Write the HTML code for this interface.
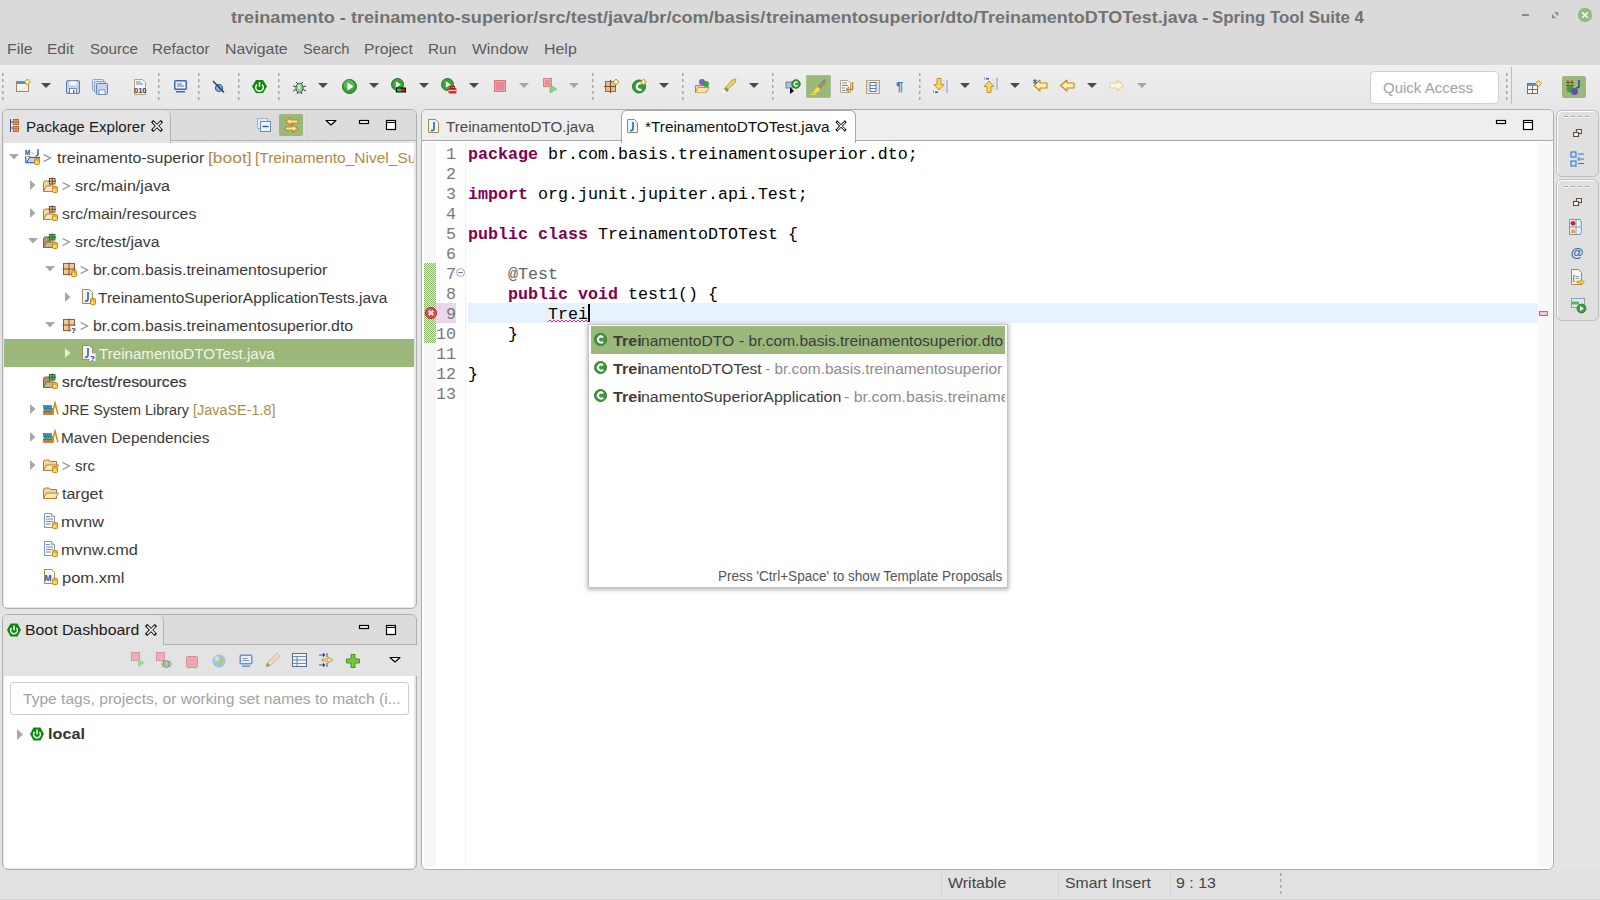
<!DOCTYPE html>
<html><head><meta charset="utf-8"><style>
html,body{margin:0;padding:0;width:1600px;height:900px;overflow:hidden;background:#e4e4e4}
body{position:relative;font-family:'Liberation Sans', sans-serif}
.t{position:absolute;white-space:pre;line-height:0;font-family:'Liberation Sans', sans-serif}
.r{position:absolute;box-sizing:border-box}
</style></head><body>
<div class="r" style="left:0px;top:0px;width:1600px;height:900px;background:#e4e4e4;"></div>
<div class="r" style="left:0px;top:0px;width:1600px;height:65px;background:#dadada;"></div>
<div class="t" style="left:231.32px;top:16.95px;font-size:16.3px;color:#727272;font-weight:700;transform:scaleX(1.1140);transform-origin:0 0;">treinamento - treinamento-superior/src/test/java/br/com/basis/</div>
<div class="t" style="left:765.82px;top:16.95px;font-size:16.3px;color:#727272;font-weight:700;transform:scaleX(1.1009);transform-origin:0 0;">treinamentosuperior/dto/TreinamentoDTOTest.java</div>
<div class="t" style="left:1202.22px;top:16.95px;font-size:16.3px;color:#727272;font-weight:700;transform:scaleX(1.2029);transform-origin:0 0;">-</div>
<div class="t" style="left:1211.99px;top:16.95px;font-size:16.3px;color:#727272;font-weight:700;transform:scaleX(1.0327);transform-origin:0 0;">Spring Tool Suite 4</div>
<div class="r" style="left:1522px;top:14px;width:7px;height:2px;background:#8a8a8a;"></div>
<svg class="r" style="left:1552px;top:12px;" width="7" height="7" viewBox="0 0 7 7"><path d="M2 0 H6.2 V4.2 Z M0 2 V6.2 H4.2 Z" fill="#8a8a8a"/></svg>
<svg class="r" style="left:1577px;top:7px;" width="16" height="16" viewBox="0 0 16 16"><circle cx="8" cy="8" r="7.2" fill="#96b97c"/><path d="M5.2 5.2 L10.8 10.8 M10.8 5.2 L5.2 10.8" stroke="#fff" stroke-width="1.5"/></svg>
<div class="t" style="left:7.13px;top:49.10px;font-size:15px;color:#5b5b5b;transform:scaleX(1.0595);transform-origin:0 0;">File</div>
<div class="t" style="left:47.36px;top:49.10px;font-size:15px;color:#5b5b5b;transform:scaleX(1.0357);transform-origin:0 0;">Edit</div>
<div class="t" style="left:89.72px;top:49.10px;font-size:15px;color:#5b5b5b;transform:scaleX(1.0103);transform-origin:0 0;">Source</div>
<div class="t" style="left:152.38px;top:49.10px;font-size:15px;color:#5b5b5b;transform:scaleX(1.0145);transform-origin:0 0;">Refactor</div>
<div class="t" style="left:225.13px;top:49.10px;font-size:15px;color:#5b5b5b;transform:scaleX(1.0576);transform-origin:0 0;">Navigate</div>
<div class="t" style="left:302.94px;top:49.10px;font-size:15px;color:#5b5b5b;transform:scaleX(0.9776);transform-origin:0 0;">Search</div>
<div class="t" style="left:364.35px;top:49.10px;font-size:15px;color:#5b5b5b;transform:scaleX(1.0446);transform-origin:0 0;">Project</div>
<div class="t" style="left:428.37px;top:49.10px;font-size:15px;color:#5b5b5b;transform:scaleX(1.0256);transform-origin:0 0;">Run</div>
<div class="t" style="left:472.32px;top:49.10px;font-size:15px;color:#5b5b5b;transform:scaleX(1.0502);transform-origin:0 0;">Window</div>
<div class="t" style="left:544.33px;top:49.10px;font-size:15px;color:#5b5b5b;transform:scaleX(1.0612);transform-origin:0 0;">Help</div>
<div class="r" style="left:0px;top:65px;width:1600px;height:44px;background:linear-gradient(#efefef,#e6e6e6);"></div>
<svg class="r" style="left:2px;top:72px;" width="2" height="30" viewBox="0 0 2 30"><rect x="0" y="1" width="1.5" height="3" fill="#a8a8a8"/><rect x="0" y="7" width="1.5" height="3" fill="#a8a8a8"/><rect x="0" y="13" width="1.5" height="3" fill="#a8a8a8"/><rect x="0" y="19" width="1.5" height="3" fill="#a8a8a8"/><rect x="0" y="25" width="1.5" height="3" fill="#a8a8a8"/></svg>
<svg class="r" style="left:158px;top:72px;" width="2" height="30" viewBox="0 0 2 30"><rect x="0" y="1" width="1.5" height="3" fill="#a8a8a8"/><rect x="0" y="7" width="1.5" height="3" fill="#a8a8a8"/><rect x="0" y="13" width="1.5" height="3" fill="#a8a8a8"/><rect x="0" y="19" width="1.5" height="3" fill="#a8a8a8"/><rect x="0" y="25" width="1.5" height="3" fill="#a8a8a8"/></svg>
<svg class="r" style="left:198px;top:72px;" width="2" height="30" viewBox="0 0 2 30"><rect x="0" y="1" width="1.5" height="3" fill="#a8a8a8"/><rect x="0" y="7" width="1.5" height="3" fill="#a8a8a8"/><rect x="0" y="13" width="1.5" height="3" fill="#a8a8a8"/><rect x="0" y="19" width="1.5" height="3" fill="#a8a8a8"/><rect x="0" y="25" width="1.5" height="3" fill="#a8a8a8"/></svg>
<svg class="r" style="left:238px;top:72px;" width="2" height="30" viewBox="0 0 2 30"><rect x="0" y="1" width="1.5" height="3" fill="#a8a8a8"/><rect x="0" y="7" width="1.5" height="3" fill="#a8a8a8"/><rect x="0" y="13" width="1.5" height="3" fill="#a8a8a8"/><rect x="0" y="19" width="1.5" height="3" fill="#a8a8a8"/><rect x="0" y="25" width="1.5" height="3" fill="#a8a8a8"/></svg>
<svg class="r" style="left:278px;top:72px;" width="2" height="30" viewBox="0 0 2 30"><rect x="0" y="1" width="1.5" height="3" fill="#a8a8a8"/><rect x="0" y="7" width="1.5" height="3" fill="#a8a8a8"/><rect x="0" y="13" width="1.5" height="3" fill="#a8a8a8"/><rect x="0" y="19" width="1.5" height="3" fill="#a8a8a8"/><rect x="0" y="25" width="1.5" height="3" fill="#a8a8a8"/></svg>
<svg class="r" style="left:592px;top:72px;" width="2" height="30" viewBox="0 0 2 30"><rect x="0" y="1" width="1.5" height="3" fill="#a8a8a8"/><rect x="0" y="7" width="1.5" height="3" fill="#a8a8a8"/><rect x="0" y="13" width="1.5" height="3" fill="#a8a8a8"/><rect x="0" y="19" width="1.5" height="3" fill="#a8a8a8"/><rect x="0" y="25" width="1.5" height="3" fill="#a8a8a8"/></svg>
<svg class="r" style="left:682px;top:72px;" width="2" height="30" viewBox="0 0 2 30"><rect x="0" y="1" width="1.5" height="3" fill="#a8a8a8"/><rect x="0" y="7" width="1.5" height="3" fill="#a8a8a8"/><rect x="0" y="13" width="1.5" height="3" fill="#a8a8a8"/><rect x="0" y="19" width="1.5" height="3" fill="#a8a8a8"/><rect x="0" y="25" width="1.5" height="3" fill="#a8a8a8"/></svg>
<svg class="r" style="left:772px;top:72px;" width="2" height="30" viewBox="0 0 2 30"><rect x="0" y="1" width="1.5" height="3" fill="#a8a8a8"/><rect x="0" y="7" width="1.5" height="3" fill="#a8a8a8"/><rect x="0" y="13" width="1.5" height="3" fill="#a8a8a8"/><rect x="0" y="19" width="1.5" height="3" fill="#a8a8a8"/><rect x="0" y="25" width="1.5" height="3" fill="#a8a8a8"/></svg>
<svg class="r" style="left:919px;top:72px;" width="2" height="30" viewBox="0 0 2 30"><rect x="0" y="1" width="1.5" height="3" fill="#a8a8a8"/><rect x="0" y="7" width="1.5" height="3" fill="#a8a8a8"/><rect x="0" y="13" width="1.5" height="3" fill="#a8a8a8"/><rect x="0" y="19" width="1.5" height="3" fill="#a8a8a8"/><rect x="0" y="25" width="1.5" height="3" fill="#a8a8a8"/></svg>
<svg class="r" style="left:1506px;top:72px;" width="2" height="30" viewBox="0 0 2 30"><rect x="0" y="1" width="1.5" height="3" fill="#a8a8a8"/><rect x="0" y="7" width="1.5" height="3" fill="#a8a8a8"/><rect x="0" y="13" width="1.5" height="3" fill="#a8a8a8"/><rect x="0" y="19" width="1.5" height="3" fill="#a8a8a8"/><rect x="0" y="25" width="1.5" height="3" fill="#a8a8a8"/></svg>
<div class="r" style="left:1511px;top:67px;width:1px;height:37px;background:#bdbdbd;"></div>
<svg class="r" style="left:41px;top:83px;" width="10" height="6" viewBox="0 0 10 6"><path d="M0 0 L10 0 L5 5 Z" fill="#4a4a4a"/></svg>
<svg class="r" style="left:318px;top:83px;" width="10" height="6" viewBox="0 0 10 6"><path d="M0 0 L10 0 L5 5 Z" fill="#4a4a4a"/></svg>
<svg class="r" style="left:369px;top:83px;" width="10" height="6" viewBox="0 0 10 6"><path d="M0 0 L10 0 L5 5 Z" fill="#4a4a4a"/></svg>
<svg class="r" style="left:419px;top:83px;" width="10" height="6" viewBox="0 0 10 6"><path d="M0 0 L10 0 L5 5 Z" fill="#4a4a4a"/></svg>
<svg class="r" style="left:469px;top:83px;" width="10" height="6" viewBox="0 0 10 6"><path d="M0 0 L10 0 L5 5 Z" fill="#4a4a4a"/></svg>
<svg class="r" style="left:659px;top:83px;" width="10" height="6" viewBox="0 0 10 6"><path d="M0 0 L10 0 L5 5 Z" fill="#4a4a4a"/></svg>
<svg class="r" style="left:749px;top:83px;" width="10" height="6" viewBox="0 0 10 6"><path d="M0 0 L10 0 L5 5 Z" fill="#4a4a4a"/></svg>
<svg class="r" style="left:960px;top:83px;" width="10" height="6" viewBox="0 0 10 6"><path d="M0 0 L10 0 L5 5 Z" fill="#4a4a4a"/></svg>
<svg class="r" style="left:1010px;top:83px;" width="10" height="6" viewBox="0 0 10 6"><path d="M0 0 L10 0 L5 5 Z" fill="#4a4a4a"/></svg>
<svg class="r" style="left:1087px;top:83px;" width="10" height="6" viewBox="0 0 10 6"><path d="M0 0 L10 0 L5 5 Z" fill="#4a4a4a"/></svg>
<svg class="r" style="left:519px;top:83px;" width="10" height="6" viewBox="0 0 10 6"><path d="M0 0 L10 0 L5 5 Z" fill="#a5a5a5"/></svg>
<svg class="r" style="left:569px;top:83px;" width="10" height="6" viewBox="0 0 10 6"><path d="M0 0 L10 0 L5 5 Z" fill="#a5a5a5"/></svg>
<svg class="r" style="left:1137px;top:83px;" width="10" height="6" viewBox="0 0 10 6"><path d="M0 0 L10 0 L5 5 Z" fill="#a5a5a5"/></svg>
<div class="r" style="left:805.5px;top:74.5px;width:25px;height:23px;background:#9bb77a;border-radius:2px;box-shadow:inset 0 0 0 1px #a8c090;"></div>
<div class="r" style="left:1561.5px;top:75.5px;width:24.5px;height:22.5px;background:#9bb77a;border-radius:2px;"></div>
<svg class="r" style="left:14.5px;top:78px;" width="16" height="16" viewBox="0 0 16 16"><rect x="1.5" y="3.5" width="12" height="10" fill="#eef6fc" stroke="#a88a50"/><rect x="2" y="4" width="11" height="2" fill="#4a90d8"/><path d="M4 13 Q10 12 12 7" stroke="#f0d890" fill="none"/><path d="M12.5 1 L15.5 4 L12.5 7 L9.5 4 Z" fill="#f6e27a" stroke="#b08a20" stroke-width="0.9"/><path d="M12.5 2 V6 M10.5 4 H14.5" stroke="#fff" stroke-width="0.8"/></svg>
<svg class="r" style="left:65px;top:79px;" width="16" height="16" viewBox="0 0 16 16"><rect x="1.5" y="1.5" width="13" height="13" rx="1.5" fill="#c4d4ee" stroke="#5878b0"/><rect x="4" y="2" width="8" height="5" fill="#f4f6fa" stroke="#a8b8d0" stroke-width="0.6"/><rect x="4.5" y="9.5" width="7" height="5" fill="#f8f8fc" stroke="#5878b0" stroke-width="0.8"/><rect x="8" y="11" width="1.5" height="3" fill="#5878b0"/></svg>
<svg class="r" style="left:92px;top:79px;" width="16" height="16" viewBox="0 0 16 16"><rect x="0.5" y="0.5" width="11" height="11" rx="1" fill="#dfe8f6" stroke="#7890c0" stroke-width="0.8"/><rect x="2.5" y="2.5" width="11" height="11" rx="1" fill="#d4e0f2" stroke="#7890c0" stroke-width="0.8"/><rect x="4.5" y="4.5" width="11" height="11" rx="1" fill="#c4d4ee" stroke="#5878b0" stroke-width="0.9"/><rect x="7" y="11" width="6" height="4.5" fill="#f8f8fc" stroke="#5878b0" stroke-width="0.7"/></svg>
<svg class="r" style="left:133px;top:79px;" width="16" height="16" viewBox="0 0 16 16"><path d="M1.5 0.5 H9.5 L12.5 3.5 V15.5 H1.5 Z" fill="#f4f6fa" stroke="#c0a060"/><path d="M3 3 H8 M3 5 H10" stroke="#5878b0" stroke-width="0.9"/><text x="1" y="14" font-family="Liberation Sans" font-weight="700" font-size="7.5" fill="#2a3a6a">010</text></svg>
<svg class="r" style="left:173px;top:79px;" width="16" height="16" viewBox="0 0 16 16"><rect x="1" y="1" width="13" height="10" rx="1.5" fill="#3a68b8"/><rect x="2.5" y="2.5" width="10" height="7" fill="#eef4fc"/><path d="M4 5 H9 M4 7 H11" stroke="#3a68b8" stroke-width="0.9"/><rect x="3" y="12" width="9" height="1.5" fill="#3a68b8"/></svg>
<svg class="r" style="left:211px;top:79px;" width="16" height="16" viewBox="0 0 16 16"><circle cx="8" cy="9" r="3.6" fill="#8ab0d8" stroke="#2a5a98"/><path d="M2 2 L13 13.5" stroke="#1a3a78" stroke-width="1.4"/></svg>
<svg class="r" style="left:252px;top:79px;" width="16" height="16" viewBox="0 0 16 16"><path d="M4 1 H11 L15 7.5 L11 14 H4 L0 7.5 Z" fill="#0c8a0c"/><path d="M5 5.5 A3.8 3.8 0 1 0 10 5.5" stroke="#fff" stroke-width="1.5" fill="none"/><path d="M7.5 3 V8" stroke="#fff" stroke-width="1.5"/></svg>
<svg class="r" style="left:292px;top:79px;" width="16" height="16" viewBox="0 0 16 16"><path d="M4 3 L6 5 M11 3 L9 5 M1 7 L5 8 M14 7 L10 8 M1 12 L5 10 M14 12 L10 10 M5 15 L6 12 M10 15 L9 12" stroke="#2a4a4a" stroke-width="1"/><ellipse cx="7.5" cy="9" rx="3.6" ry="4.8" fill="#9cc48c" stroke="#3a6a5a"/><ellipse cx="7.2" cy="8" rx="1.3" ry="2.4" fill="#d8f0c8"/></svg>
<svg class="r" style="left:342px;top:79px;" width="16" height="16" viewBox="0 0 16 16"><circle cx="7.5" cy="7.5" r="7" fill="#3aa03a" stroke="#1e7a1e"/><circle cx="7" cy="6" r="5" fill="#58b858"/><path d="M5.5 3.5 L11.5 7.5 L5.5 11.5 Z" fill="#fff"/></svg>
<svg class="r" style="left:391px;top:78px;" width="16" height="16" viewBox="0 0 16 16"><circle cx="6.5" cy="6.5" r="6" fill="#3aa03a" stroke="#1e7a1e"/><path d="M4.8 3.3 L9.8 6.5 L4.8 9.7 Z" fill="#fff"/><rect x="5" y="9.5" width="10" height="5" fill="#000"/><rect x="6" y="10.5" width="4" height="3" fill="#2ad02a"/><rect x="10" y="10.5" width="4" height="3" fill="#e01818"/></svg>
<svg class="r" style="left:441px;top:78px;" width="16" height="16" viewBox="0 0 16 16"><circle cx="6.5" cy="6.5" r="6" fill="#3aa03a" stroke="#1e7a1e"/><path d="M4.8 3.3 L9.8 6.5 L4.8 9.7 Z" fill="#fff"/><rect x="7.5" y="10" width="8" height="5.5" rx="1" fill="#e02828"/><rect x="9.5" y="8.5" width="4" height="2" fill="none" stroke="#c01818"/><path d="M7.5 12.5 H15.5" stroke="#fff" stroke-width="0.8"/></svg>
<svg class="r" style="left:492px;top:78px;" width="16" height="16" viewBox="0 0 16 16"><rect x="2.5" y="2.5" width="11" height="11" fill="#f0a0a8" stroke="#d87880"/><rect x="4" y="4" width="8" height="8" fill="#e88890"/></svg>
<svg class="r" style="left:543px;top:78px;" width="16" height="16" viewBox="0 0 16 16"><rect x="0.5" y="0.5" width="8" height="8" fill="#f0a8b0" stroke="#d88088"/><rect x="2" y="2" width="5" height="5" fill="#e89098"/><path d="M7 7 L14 11 L7 15 Z" fill="#8ad08a" stroke="#6ab86a" stroke-width="0.6"/></svg>
<svg class="r" style="left:604px;top:78px;" width="16" height="16" viewBox="0 0 16 16"><rect x="1.5" y="3.5" width="10" height="10" fill="#e0c090" stroke="#a06838"/><path d="M6.5 2 V15 M0 8.5 H12" stroke="#804828" stroke-width="1.1"/><path d="M12 1 L15 4 L12 7 L9 4 Z" fill="#f6e27a" stroke="#b08a20" stroke-width="0.9"/><path d="M12 2 V6 M10 4 H14" stroke="#fff" stroke-width="0.8"/></svg>
<svg class="r" style="left:632px;top:78px;" width="16" height="16" viewBox="0 0 16 16"><circle cx="7" cy="8.5" r="6.5" fill="#3a9a3a" stroke="#1e7a1e"/><path d="M9.5 5.5 A3.3 3.3 0 1 0 9.5 11.5" stroke="#fff" stroke-width="2.2" fill="none"/><path d="M11.5 1 L14.5 4 L11.5 7 L8.5 4 Z" fill="#f6e27a" stroke="#b08a20" stroke-width="0.9"/><path d="M11.5 2 V6 M9.5 4 H13.5" stroke="#fff" stroke-width="0.8"/></svg>
<svg class="r" style="left:694px;top:78px;" width="16" height="16" viewBox="0 0 16 16"><path d="M1.5 7.5 H12.5 L14.5 9 L12 14.5 H1.5 Z" fill="#f4d898" stroke="#b88030"/><path d="M1.5 14.5 L4 9.5 H15 L12 14.5" fill="#f8e4b0" stroke="#b88030" stroke-width="0.8"/><circle cx="8" cy="4" r="3" fill="#7a60c0"/><circle cx="12" cy="6" r="3" fill="#3aa03a"/></svg>
<svg class="r" style="left:721px;top:78px;" width="16" height="16" viewBox="0 0 16 16"><path d="M2 14 L5 9 L11 2 L15 1 L14 5 L7 11 Z" fill="#f0d060" stroke="#c09020" stroke-width="0.8"/><path d="M4 10 L7 13" stroke="#888" stroke-width="2.5"/><path d="M1 15 L4 12" stroke="#fff8c0" stroke-width="2.5"/></svg>
<svg class="r" style="left:785px;top:79px;" width="16" height="16" viewBox="0 0 16 16"><rect x="1" y="3" width="7" height="6" fill="#b0c0e0" stroke="#6070a0" stroke-width="0.8"/><path d="M5 8 L9 12 L5 15 Z" fill="#111"/><circle cx="11" cy="5" r="4.2" fill="#3aa03a" stroke="#1e7a1e"/><path d="M12.5 3.5 A2 2 0 1 0 12.5 6.5" stroke="#fff" stroke-width="1.3" fill="none"/></svg>
<svg class="r" style="left:810px;top:79px;" width="16" height="16" viewBox="0 0 16 16"><path d="M8 8 L14 0.5 L16 2.5 L10 10 Z" fill="#9a9070" stroke="#807858" stroke-width="0.6"/><path d="M8 8 L10 10 L9.5 12 Q6 14.5 2.5 15 Q4 11 6.5 8.5 Z" fill="#f4e04a" stroke="#d8c030" stroke-width="0.6"/><path d="M0.5 15.5 H6" stroke="#f0dc40" stroke-width="1.2"/></svg>
<svg class="r" style="left:839px;top:79px;" width="16" height="16" viewBox="0 0 16 16"><path d="M1.5 1.5 H9 L11.5 4 V13.5 H1.5 Z" fill="#f8f8fc" stroke="#b8a070" stroke-width="0.9"/><path d="M3 4 H8 M3 6.5 H9 M3 9 H6 M3 11.5 H6" stroke="#4870b8" stroke-width="0.8"/><path d="M13.5 3 V10.5 H8.5" stroke="#c08820" stroke-width="1.5" fill="none"/><path d="M10 8 L7.5 10.5 L10 13" stroke="#c08820" stroke-width="1.4" fill="none"/></svg>
<svg class="r" style="left:865px;top:79px;" width="16" height="16" viewBox="0 0 16 16"><rect x="1.5" y="1.5" width="13" height="13" fill="#f4f0e4" stroke="#b8a070"/><rect x="5" y="3.5" width="6" height="9" fill="#fff" stroke="#4870b8" stroke-width="0.9"/><path d="M5 6.5 H11 M5 9.5 H11" stroke="#4870b8" stroke-width="0.9"/><path d="M3 3 V13 M13 3 V13" stroke="#8098c0" stroke-width="0.8" stroke-dasharray="1 1"/></svg>
<svg class="r" style="left:893px;top:78px;" width="16" height="16" viewBox="0 0 16 16"><text x="3" y="13" font-family="Liberation Sans" font-weight="700" font-size="13" fill="#3a78c0">&#182;</text></svg>
<svg class="r" style="left:932px;top:78px;" width="16" height="16" viewBox="0 0 16 16"><path d="M5 0.5 H9 V6.5 H12 L7 12 L2 6.5 H5 Z" fill="#f8d868" stroke="#c08820" stroke-width="0.9"/><path d="M10.5 3 H13 M10.5 6 H13 M11 9 H13 M9 12 H13" stroke="#a8b8d8" stroke-width="0.6"/><path d="M15 2 V15" stroke="#6888b8" stroke-width="0.8"/><rect x="3" y="13.5" width="3" height="1.5" fill="#3a58a0"/><path d="M1.5 12 V15" stroke="#6888b8" stroke-width="0.6"/></svg>
<svg class="r" style="left:982px;top:77px;" width="16" height="16" viewBox="0 0 16 16"><path d="M5 15.5 H9 V9.5 H12 L7 4 L2 9.5 H5 Z" fill="#f8d868" stroke="#c08820" stroke-width="0.9"/><path d="M10.5 3 H13 M11 6 H13 M11 9 H13 M10.5 12 H13" stroke="#a8b8d8" stroke-width="0.6"/><path d="M15 0.5 V13" stroke="#6888b8" stroke-width="0.8"/><rect x="4" y="1" width="3" height="1.5" fill="#3a58a0"/><path d="M2.5 0 V3" stroke="#6888b8" stroke-width="0.6"/></svg>
<svg class="r" style="left:1032px;top:78px;" width="16" height="16" viewBox="0 0 16 16"><path d="M15 5 H8 V2 L2 7.5 L8 13 V10 H15 Z" fill="#fff0b0" stroke="#c08820" stroke-width="1.1" stroke-linejoin="round"/><path d="M3 1 V6 M1 2 L5 5 M5 2 L1 5" stroke="#2a4a8a" stroke-width="0.9"/></svg>
<svg class="r" style="left:1059px;top:78px;" width="16" height="16" viewBox="0 0 16 16"><path d="M15 5 H8 V2 L1.5 7.5 L8 13 V10 H15 Z" fill="#fff0b0" stroke="#c08820" stroke-width="1.1" stroke-linejoin="round"/></svg>
<svg class="r" style="left:1109px;top:78px;" width="16" height="16" viewBox="0 0 16 16"><path d="M1 5 H8 V2 L14.5 7.5 L8 13 V10 H1 Z" fill="#fbf6e4" stroke="#e8d098" stroke-width="1.1" stroke-linejoin="round"/></svg>
<svg class="r" style="left:1526px;top:79px;" width="16" height="16" viewBox="0 0 16 16"><rect x="1.5" y="4.5" width="10" height="10" fill="#f4f4f4" stroke="#807050"/><rect x="2" y="5" width="9" height="2" fill="#5a98d8"/><path d="M6.5 7 V14.5 M1.5 10.5 H11.5" stroke="#807050"/><path d="M12.5 1.5 L15.5 4.5 L12.5 7.5 L9.5 4.5 Z" fill="#f6e27a" stroke="#b08a20" stroke-width="0.9"/><path d="M12.5 2.5 V6.5 M10.5 4.5 H14.5" stroke="#fff" stroke-width="0.8"/></svg>
<svg class="r" style="left:1566px;top:79px;" width="16" height="16" viewBox="0 0 16 16"><path d="M2 1 V8 M6 1 V8 M0 3.5 H8 M0 6.5 H8" stroke="#8a4a2a" stroke-width="1"/><circle cx="4" cy="10" r="3.5" fill="#3aa03a"/><circle cx="8.5" cy="12.5" r="3.5" fill="#6050b0"/><path d="M13 1 V7 Q13 9 10 9" stroke="#2050b0" stroke-width="1.5" fill="none"/></svg>
<div class="r" style="left:1369.5px;top:70.5px;width:129px;height:33px;background:#fff;border:1px solid #cfcfcf;border-radius:4px;"></div>
<div class="t" style="left:1383.03px;top:87.50px;font-size:15px;color:#a3a3a3;transform:scaleX(1.0000);transform-origin:0 0;">Quick Access</div>
<div class="r" style="left:1.5px;top:109px;width:415.5px;height:500px;background:#e6e6e6;border:1px solid #aeaeae;border-radius:6px;"></div>
<div class="r" style="left:4px;top:143px;width:410px;height:464px;background:#fff;"></div>
<div class="r" style="left:2.5px;top:110px;width:413.5px;height:31px;background:#dcdcdc;border-radius:5px 5px 0 0;"></div>
<div class="r" style="left:169.5px;top:140px;width:246.5px;height:1px;background:#b4b4b4;"></div>
<div class="r" style="left:2.5px;top:110px;width:168px;height:33px;background:#e3e3e3;border-radius:5px 6px 0 0;border-right:1px solid #b4b4b4;"></div>
<div class="t" style="left:25.59px;top:126.80px;font-size:15px;color:#1a1a1a;transform:scaleX(1.0066);transform-origin:0 0;">Package Explorer</div>
<svg class="r" style="left:151px;top:120px;" width="12" height="12" viewBox="0 0 12 12"><path d="M2.2 2.2 L9.8 9.8 M9.8 2.2 L2.2 9.8" stroke="#000" stroke-width="3.2" stroke-linecap="square"/><path d="M2.6 2.6 L9.4 9.4 M9.4 2.6 L2.6 9.4" stroke="#fff" stroke-width="1.5" stroke-linecap="square"/></svg>
<div class="r" style="left:279px;top:114px;width:24px;height:22px;background:#9bb77a;border-radius:2px;"></div>
<svg class="r" style="left:8px;top:118px;" width="16" height="16" viewBox="0 0 16 16"><path d="M2.5 1 V14 M2.5 4 H5 M2.5 10 H5" stroke="#3a4a6a" stroke-width="1"/><rect x="5.5" y="1.5" width="5" height="5" fill="#f0b070" stroke="#b06030" stroke-width="0.9"/><path d="M8.0 1.5 V6.5 M5.5 4.0 H10.5" stroke="#b06030" stroke-width="0.8"/><rect x="5.5" y="8.5" width="5" height="5" fill="#f0b070" stroke="#b06030" stroke-width="0.9"/><path d="M8.0 8.5 V13.5 M5.5 11.0 H10.5" stroke="#b06030" stroke-width="0.8"/></svg>
<svg class="r" style="left:257px;top:118px;" width="16" height="16" viewBox="0 0 16 16"><rect x="0.5" y="0.5" width="10" height="10" fill="#e8eef8" stroke="#90a8c8" stroke-width="0.8"/><rect x="3.5" y="3.5" width="10" height="10" fill="#f0f4fc" stroke="#6888b8"/><path d="M5.5 8.5 H11.5" stroke="#2a58a8" stroke-width="1.4"/></svg>
<svg class="r" style="left:284px;top:117px;" width="16" height="16" viewBox="0 0 16 16"><path d="M14 3 H7 V0.8 L1.5 4.5 L7 8.2 V6 H14 Z" fill="#fce89a" stroke="#c08820" stroke-width="1.1" stroke-linejoin="round"/><path d="M1.5 10 H8.5 V7.8 L14 11.5 L8.5 15.2 V13 H1.5 Z" fill="#fce89a" stroke="#c08820" stroke-width="1.1" stroke-linejoin="round"/></svg>
<svg class="r" style="left:324px;top:118px;" width="16" height="16" viewBox="0 0 16 16"><path d="M2 2.5 H12 L7 7 Z" fill="#fff" stroke="#000" stroke-width="1.1" stroke-linejoin="round"/></svg>
<svg class="r" style="left:358px;top:119px;" width="12" height="6" viewBox="0 0 12 6"><rect x="1.5" y="1.5" width="9" height="3" fill="#fff" stroke="#000" stroke-width="1.2"/></svg>
<svg class="r" style="left:385px;top:119px;" width="12" height="12" viewBox="0 0 12 12"><rect x="1.5" y="1.5" width="9" height="9" fill="#fff" stroke="#000" stroke-width="1.2"/><path d="M1.5 3.5 H10.5" stroke="#000" stroke-width="1"/></svg>
<div class="r" style="left:307px;top:112px;width:1px;height:28px;background:#d2d2d2;"></div>
<div class="r" style="left:4px;top:339px;width:410px;height:28px;background:#9bb77a;"></div>
<div class="r" style="left:4px;top:142px;width:410px;height:464px;overflow:hidden">
<svg class="r" style="left:5px;top:12px;" width="10" height="7" viewBox="0 0 10 7"><path d="M0 0 L10 0 L5 5.5 Z" fill="#a8a8a8"/></svg>
<svg class="r" style="left:21px;top:7px;" width="16" height="16" viewBox="0 0 16 16"><text x="-0.3" y="5.6" font-family="Liberation Sans" font-weight="700" font-size="6.5" fill="#1a4a98">M</text><path d="M6.5 3 L8 4.5 M7.5 5 H9" stroke="#c8a050" stroke-width="0.8"/><path d="M13 0 V5 Q13 7 10.5 6.8" stroke="#1a5aa0" stroke-width="1.3" fill="none"/><path d="M0.8 7 V13.8 H12 L14.8 8.3 H4.5 L1.8 13" fill="#b8d4f4" stroke="#2a48b0" stroke-width="1"/><path d="M1 7 H5 L6 8" stroke="#f0d890" stroke-width="1"/><rect x="9.5" y="9.5" width="5" height="6" rx="1" fill="#f8c848" stroke="#c88010" stroke-width="0.9"/><path d="M10 11 H14" stroke="#c88010" stroke-width="0.7"/><rect x="11" y="12" width="1" height="2.5" fill="#fff4c0"/></svg>
<svg class="r" style="left:39.4px;top:11.699999999999989px;" width="9" height="8" viewBox="0 0 9 8"><path d="M0.6 0.6 L7.6 4 L0.6 7.4" stroke="#8a8a8a" stroke-width="1.15" fill="none"/></svg>
<div class="t" style="left:52.86px;top:16.33px;font-size:15.5px;color:#3a3a3a;transform:scaleX(1.0300);transform-origin:0 0;">treinamento-superior</div>
<div class="t" style="left:203.78px;top:16.33px;font-size:15.5px;color:#b08a48;transform:scaleX(1.1263);transform-origin:0 0;">[boot]</div>
<div class="t" style="left:251.00px;top:16.33px;font-size:15.5px;color:#b08a48;transform:scaleX(1.0000);transform-origin:0 0;">[Treinamento_Nivel_Superior]</div>
<svg class="r" style="left:26px;top:38px;" width="7" height="10" viewBox="0 0 7 10"><path d="M0 0 L5.5 5 L0 10 Z" fill="#a8a8a8"/></svg>
<svg class="r" style="left:39px;top:35px;" width="16" height="16" viewBox="0 0 16 16"><path d="M0.5 6 Q0.5 4 2.5 4 H6 L7 5 V14.5 H0.5 Z" fill="#f0d8a0" stroke="#b07830"/><path d="M0.5 14.5 L3.5 9 H12 L9.5 14.5 Z" fill="#f8e8b8" stroke="#b07830" stroke-width="0.9"/><rect x="6.5" y="1.5" width="5.5" height="5.5" fill="#e8d0a0" stroke="#6a4030" stroke-width="0.9"/><path d="M9.25 0.5 V8.0 M5.5 4.25 H13.0" stroke="#6a4030" stroke-width="1"/><rect x="9.5" y="9.5" width="5" height="6" rx="1" fill="#f8c848" stroke="#c88010" stroke-width="0.9"/><path d="M10 11 H14" stroke="#c88010" stroke-width="0.7"/><rect x="11" y="12" width="1" height="2.5" fill="#fff4c0"/></svg>
<svg class="r" style="left:58.05px;top:39.69999999999999px;" width="9" height="8" viewBox="0 0 9 8"><path d="M0.6 0.6 L7.6 4 L0.6 7.4" stroke="#8a8a8a" stroke-width="1.15" fill="none"/></svg>
<div class="t" style="left:71.12px;top:44.33px;font-size:15.5px;color:#3a3a3a;transform:scaleX(1.0393);transform-origin:0 0;">src/main/java</div>
<svg class="r" style="left:26px;top:66px;" width="7" height="10" viewBox="0 0 7 10"><path d="M0 0 L5.5 5 L0 10 Z" fill="#a8a8a8"/></svg>
<svg class="r" style="left:39px;top:63px;" width="16" height="16" viewBox="0 0 16 16"><path d="M0.5 6 Q0.5 4 2.5 4 H6 L7 5 V14.5 H0.5 Z" fill="#f0d8a0" stroke="#b07830"/><path d="M0.5 14.5 L3.5 9 H12 L9.5 14.5 Z" fill="#f8e8b8" stroke="#b07830" stroke-width="0.9"/><rect x="6.5" y="1.5" width="5.5" height="5.5" fill="#e8d0a0" stroke="#6a4030" stroke-width="0.9"/><path d="M9.25 0.5 V8.0 M5.5 4.25 H13.0" stroke="#6a4030" stroke-width="1"/><rect x="9.5" y="9.5" width="5" height="6" rx="1" fill="#f8c848" stroke="#c88010" stroke-width="0.9"/><path d="M10 11 H14" stroke="#c88010" stroke-width="0.7"/><rect x="11" y="12" width="1" height="2.5" fill="#fff4c0"/></svg>
<div class="t" style="left:57.77px;top:72.33px;font-size:15.5px;color:#3a3a3a;transform:scaleX(1.0266);transform-origin:0 0;">src/main/resources</div>
<svg class="r" style="left:24px;top:96px;" width="10" height="7" viewBox="0 0 10 7"><path d="M0 0 L10 0 L5 5.5 Z" fill="#a8a8a8"/></svg>
<svg class="r" style="left:39px;top:91px;" width="16" height="16" viewBox="0 0 16 16"><path d="M0.5 6 Q0.5 4 2.5 4 H6 L7 5 V14.5 H0.5 Z" fill="#a89878" stroke="#806030"/><path d="M0.5 14.5 L3.5 9 H12 L9.5 14.5 Z" fill="#c8b890" stroke="#806030" stroke-width="0.9"/><rect x="6.5" y="1.5" width="5.5" height="5.5" fill="#58b858" stroke="#2a6a2a" stroke-width="0.9"/><path d="M9.25 0.5 V8.0 M5.5 4.25 H13.0" stroke="#2a6a2a" stroke-width="1"/><rect x="9.5" y="9.5" width="5" height="6" rx="1" fill="#f8c848" stroke="#c88010" stroke-width="0.9"/><path d="M10 11 H14" stroke="#c88010" stroke-width="0.7"/><rect x="11" y="12" width="1" height="2.5" fill="#fff4c0"/></svg>
<svg class="r" style="left:58.05px;top:95.69999999999999px;" width="9" height="8" viewBox="0 0 9 8"><path d="M0.6 0.6 L7.6 4 L0.6 7.4" stroke="#8a8a8a" stroke-width="1.15" fill="none"/></svg>
<div class="t" style="left:71.12px;top:100.33px;font-size:15.5px;color:#3a3a3a;transform:scaleX(1.0234);transform-origin:0 0;">src/test/java</div>
<svg class="r" style="left:41px;top:124px;" width="10" height="7" viewBox="0 0 10 7"><path d="M0 0 L10 0 L5 5.5 Z" fill="#a8a8a8"/></svg>
<svg class="r" style="left:58px;top:119px;" width="16" height="16" viewBox="0 0 16 16"><rect x="1.5" y="2.5" width="11" height="11" fill="#e8cc98" stroke="#8a4a30" stroke-width="0.9"/><path d="M7.0 1.5 V14.5 M0.5 8.0 H13.5" stroke="#8a4a30" stroke-width="1"/><rect x="9.5" y="9.5" width="5" height="6" rx="1" fill="#f8c848" stroke="#c88010" stroke-width="0.9"/><path d="M10 11 H14" stroke="#c88010" stroke-width="0.7"/><rect x="11" y="12" width="1" height="2.5" fill="#fff4c0"/></svg>
<svg class="r" style="left:76.05px;top:123.69999999999999px;" width="9" height="8" viewBox="0 0 9 8"><path d="M0.6 0.6 L7.6 4 L0.6 7.4" stroke="#8a8a8a" stroke-width="1.15" fill="none"/></svg>
<div class="t" style="left:88.72px;top:128.33px;font-size:15.5px;color:#3a3a3a;transform:scaleX(1.0228);transform-origin:0 0;">br.com.basis.treinamentosuperior</div>
<svg class="r" style="left:61px;top:150px;" width="7" height="10" viewBox="0 0 7 10"><path d="M0 0 L5.5 5 L0 10 Z" fill="#a8a8a8"/></svg>
<svg class="r" style="left:77px;top:147px;" width="16" height="16" viewBox="0 0 16 16"><path d="M1.5 0.5 H8.5 L11.5 3.5 V14.5 H1.5 Z" fill="#eef4fc" stroke="#a88a50"/><path d="M7 3 V10 Q7 12.5 4 12" stroke="#2a68b0" stroke-width="1.6" fill="none"/><rect x="9.5" y="9.5" width="5" height="6" rx="1" fill="#f8c848" stroke="#c88010" stroke-width="0.9"/><path d="M10 11 H14" stroke="#c88010" stroke-width="0.7"/><rect x="11" y="12" width="1" height="2.5" fill="#fff4c0"/></svg>
<div class="t" style="left:94.44px;top:156.33px;font-size:15.5px;color:#3a3a3a;transform:scaleX(0.9989);transform-origin:0 0;">TreinamentoSuperiorApplicationTests.java</div>
<svg class="r" style="left:41px;top:180px;" width="10" height="7" viewBox="0 0 10 7"><path d="M0 0 L10 0 L5 5.5 Z" fill="#a8a8a8"/></svg>
<svg class="r" style="left:58px;top:175px;" width="16" height="16" viewBox="0 0 16 16"><rect x="1.5" y="2.5" width="11" height="11" fill="#e8cc98" stroke="#8a4a30" stroke-width="0.9"/><path d="M7.0 1.5 V14.5 M0.5 8.0 H13.5" stroke="#8a4a30" stroke-width="1"/><rect x="9" y="9" width="6" height="7" fill="#fff"/><text x="9" y="16" font-family="Liberation Sans" font-weight="700" font-size="8" fill="#2020a0">?</text></svg>
<svg class="r" style="left:76.05px;top:179.7px;" width="9" height="8" viewBox="0 0 9 8"><path d="M0.6 0.6 L7.6 4 L0.6 7.4" stroke="#8a8a8a" stroke-width="1.15" fill="none"/></svg>
<div class="t" style="left:88.72px;top:184.33px;font-size:15.5px;color:#3a3a3a;transform:scaleX(1.0236);transform-origin:0 0;">br.com.basis.treinamentosuperior.dto</div>
<svg class="r" style="left:61px;top:206px;" width="7" height="10" viewBox="0 0 7 10"><path d="M0 0 L5.5 5 L0 10 Z" fill="#e4ecd8"/></svg>
<svg class="r" style="left:77px;top:203px;" width="16" height="16" viewBox="0 0 16 16"><path d="M1.5 0.5 H8.5 L11.5 3.5 V14.5 H1.5 Z" fill="#eef4fc" stroke="#a88a50"/><path d="M7 3 V10 Q7 12.5 4 12" stroke="#2a68b0" stroke-width="1.6" fill="none"/><rect x="8.5" y="8.5" width="6" height="7.5" fill="#fff"/><text x="9" y="16" font-family="Liberation Sans" font-weight="700" font-size="8" fill="#2020a0">?</text></svg>
<div class="t" style="left:95.10px;top:212.33px;font-size:15.5px;color:#f4f4e8;transform:scaleX(0.9759);transform-origin:0 0;">TreinamentoDTOTest.java</div>
<svg class="r" style="left:39px;top:231px;" width="16" height="16" viewBox="0 0 16 16"><path d="M0.5 6 Q0.5 4 2.5 4 H6 L7 5 V14.5 H0.5 Z" fill="#a89878" stroke="#806030"/><path d="M0.5 14.5 L3.5 9 H12 L9.5 14.5 Z" fill="#c8b890" stroke="#806030" stroke-width="0.9"/><rect x="6.5" y="1.5" width="5.5" height="5.5" fill="#58b858" stroke="#2a6a2a" stroke-width="0.9"/><path d="M9.25 0.5 V8.0 M5.5 4.25 H13.0" stroke="#2a6a2a" stroke-width="1"/><rect x="9.5" y="9.5" width="5" height="6" rx="1" fill="#f8c848" stroke="#c88010" stroke-width="0.9"/><path d="M10 11 H14" stroke="#c88010" stroke-width="0.7"/><rect x="11" y="12" width="1" height="2.5" fill="#fff4c0"/></svg>
<div class="t" style="left:57.78px;top:240.33px;font-size:15.5px;color:#3a3a3a;transform:scaleX(1.0170);transform-origin:0 0;-webkit-text-stroke:0.2px #333;">src/test/resources</div>
<svg class="r" style="left:26px;top:262px;" width="7" height="10" viewBox="0 0 7 10"><path d="M0 0 L5.5 5 L0 10 Z" fill="#a8a8a8"/></svg>
<svg class="r" style="left:39px;top:259px;" width="16" height="16" viewBox="0 0 16 16"><rect x="0.5" y="10.5" width="10" height="3" fill="#d07838" stroke="#905020" stroke-width="0.5"/><rect x="1" y="7.5" width="9" height="3" fill="#48a878" stroke="#207050" stroke-width="0.5"/><rect x="0.5" y="4.5" width="8" height="3" fill="#3a88c8" stroke="#205898" stroke-width="0.5"/><path d="M9 13.5 L12 2 L15 13.5" stroke="#d09020" stroke-width="1.6" fill="none"/></svg>
<div class="t" style="left:57.68px;top:268.33px;font-size:15.5px;color:#3a3a3a;transform:scaleX(0.9275);transform-origin:0 0;">JRE System Library</div>
<div class="t" style="left:189.39px;top:268.33px;font-size:15.5px;color:#b08a48;transform:scaleX(0.9296);transform-origin:0 0;">[JavaSE-1.8]</div>
<svg class="r" style="left:26px;top:290px;" width="7" height="10" viewBox="0 0 7 10"><path d="M0 0 L5.5 5 L0 10 Z" fill="#a8a8a8"/></svg>
<svg class="r" style="left:39px;top:287px;" width="16" height="16" viewBox="0 0 16 16"><rect x="0.5" y="10.5" width="10" height="3" fill="#d07838" stroke="#905020" stroke-width="0.5"/><rect x="1" y="7.5" width="9" height="3" fill="#48a878" stroke="#207050" stroke-width="0.5"/><rect x="0.5" y="4.5" width="8" height="3" fill="#3a88c8" stroke="#205898" stroke-width="0.5"/><path d="M9 13.5 L12 2 L15 13.5" stroke="#d09020" stroke-width="1.6" fill="none"/></svg>
<div class="t" style="left:57.47px;top:296.33px;font-size:15.5px;color:#3a3a3a;transform:scaleX(0.9893);transform-origin:0 0;">Maven Dependencies</div>
<svg class="r" style="left:26px;top:318px;" width="7" height="10" viewBox="0 0 7 10"><path d="M0 0 L5.5 5 L0 10 Z" fill="#a8a8a8"/></svg>
<svg class="r" style="left:39px;top:315px;" width="16" height="16" viewBox="0 0 16 16"><path d="M0.5 5 Q0.5 3 2.5 3 H6 L7.5 4.5 H13.5 V13.5 H0.5 Z" fill="#f0d8a0" stroke="#b07830"/><path d="M0.5 13.5 L3.5 8 H15.5 L12.5 13.5 Z" fill="#f8e8b8" stroke="#b07830" stroke-width="0.9"/><rect x="9.5" y="9.5" width="5" height="6" rx="1" fill="#f8c848" stroke="#c88010" stroke-width="0.9"/><path d="M10 11 H14" stroke="#c88010" stroke-width="0.7"/><rect x="11" y="12" width="1" height="2.5" fill="#fff4c0"/></svg>
<svg class="r" style="left:58.0px;top:319.7px;" width="9" height="8" viewBox="0 0 9 8"><path d="M0.6 0.6 L7.6 4 L0.6 7.4" stroke="#8a8a8a" stroke-width="1.15" fill="none"/></svg>
<div class="t" style="left:71.05px;top:324.33px;font-size:15.5px;color:#3a3a3a;transform:scaleX(0.9677);transform-origin:0 0;">src</div>
<svg class="r" style="left:39px;top:343px;" width="16" height="16" viewBox="0 0 16 16"><path d="M0.5 5 Q0.5 3 2.5 3 H6 L7.5 4.5 H13.5 V13.5 H0.5 Z" fill="#f0d8a0" stroke="#b07830"/><path d="M0.5 13.5 L3.5 8 H15.5 L12.5 13.5 Z" fill="#f8e8b8" stroke="#b07830" stroke-width="0.9"/></svg>
<div class="t" style="left:58.26px;top:352.33px;font-size:15.5px;color:#3a3a3a;transform:scaleX(1.0307);transform-origin:0 0;">target</div>
<svg class="r" style="left:39px;top:371px;" width="16" height="16" viewBox="0 0 16 16"><path d="M1.5 0.5 H8.5 L11.5 3.5 V14.5 H1.5 Z" fill="#f8f8fc" stroke="#7888b0" stroke-width="0.9"/><path d="M8.5 0.5 V3.5 H11.5" fill="#dde4f0" stroke="#7888b0" stroke-width="0.7"/><path d="M3 3.5 H7 M3 6 H10 M3 8.5 H10 M3 11 H8" stroke="#4870b8" stroke-width="0.8"/><rect x="9.5" y="9.5" width="5" height="6" rx="1" fill="#f8c848" stroke="#c88010" stroke-width="0.9"/><path d="M10 11 H14" stroke="#c88010" stroke-width="0.7"/><rect x="11" y="12" width="1" height="2.5" fill="#fff4c0"/></svg>
<div class="t" style="left:57.43px;top:380.33px;font-size:15.5px;color:#3a3a3a;transform:scaleX(1.0626);transform-origin:0 0;">mvnw</div>
<svg class="r" style="left:39px;top:399px;" width="16" height="16" viewBox="0 0 16 16"><path d="M1.5 0.5 H8.5 L11.5 3.5 V14.5 H1.5 Z" fill="#f8f8fc" stroke="#7888b0" stroke-width="0.9"/><path d="M8.5 0.5 V3.5 H11.5" fill="#dde4f0" stroke="#7888b0" stroke-width="0.7"/><path d="M3 3.5 H7 M3 6 H10 M3 8.5 H10 M3 11 H8" stroke="#4870b8" stroke-width="0.8"/><rect x="9.5" y="9.5" width="5" height="6" rx="1" fill="#f8c848" stroke="#c88010" stroke-width="0.9"/><path d="M10 11 H14" stroke="#c88010" stroke-width="0.7"/><rect x="11" y="12" width="1" height="2.5" fill="#fff4c0"/></svg>
<div class="t" style="left:57.44px;top:408.33px;font-size:15.5px;color:#3a3a3a;transform:scaleX(1.0500);transform-origin:0 0;">mvnw.cmd</div>
<svg class="r" style="left:39px;top:427px;" width="16" height="16" viewBox="0 0 16 16"><path d="M1.5 0.5 H8.5 L11.5 3.5 V14.5 H1.5 Z" fill="#f4f6fa" stroke="#a88a50"/><text x="1.6" y="12.3" font-family="Liberation Sans" font-weight="700" font-size="8.5" fill="#2050a0">M</text><rect x="9.5" y="9.5" width="5" height="6" rx="1" fill="#f8c848" stroke="#c88010" stroke-width="0.9"/><path d="M10 11 H14" stroke="#c88010" stroke-width="0.7"/><rect x="11" y="12" width="1" height="2.5" fill="#fff4c0"/></svg>
<div class="t" style="left:57.93px;top:436.33px;font-size:15.5px;color:#3a3a3a;transform:scaleX(1.0655);transform-origin:0 0;">pom.xml</div>
</div>
<div class="r" style="left:1.5px;top:614px;width:415.5px;height:256px;background:#e6e6e6;border:1px solid #aeaeae;border-radius:6px;"></div>
<div class="r" style="left:4px;top:676px;width:410px;height:192px;background:#fff;"></div>
<div class="r" style="left:2.5px;top:615px;width:413.5px;height:30px;background:#dcdcdc;border-radius:5px 5px 0 0;"></div>
<div class="r" style="left:163.0px;top:644px;width:253.0px;height:1px;background:#b4b4b4;"></div>
<div class="r" style="left:2.5px;top:615px;width:161.5px;height:32px;background:#e3e3e3;border-radius:5px 6px 0 0;border-right:1px solid #b4b4b4;"></div>
<div class="r" style="left:2.5px;top:645px;width:414px;height:31px;background:#e3e3e3;"></div>
<div class="t" style="left:25.23px;top:630.05px;font-size:15px;color:#1a1a1a;transform:scaleX(1.0546);transform-origin:0 0;">Boot Dashboard</div>
<svg class="r" style="left:7px;top:623px;" width="14" height="14" viewBox="0 0 14 14"><path d="M3.5 0.5 H10.5 L14 7 L10.5 13.5 H3.5 L0 7 Z" fill="#0c8a0c"/><path d="M4.6 5 A3.4 3.4 0 1 0 9.4 5" stroke="#fff" stroke-width="1.4" fill="none"/><path d="M7 2.5 V7.5" stroke="#fff" stroke-width="1.4"/></svg>
<svg class="r" style="left:130.5px;top:652px;" width="16" height="16" viewBox="0 0 16 16"><g opacity="0.75"><rect x="0.5" y="0.5" width="8" height="8" fill="#f0a0a8" stroke="#d87880"/><path d="M7 7 L14 11 L7 15 Z" fill="#8ad08a"/></g></svg>
<svg class="r" style="left:156px;top:652px;" width="16" height="16" viewBox="0 0 16 16"><g opacity="0.75"><rect x="0.5" y="0.5" width="8" height="8" fill="#f0a0a8" stroke="#d87880"/><path d="M6 9 L15 15 M15 9 L6 15 M5 12 H16" stroke="#406040" stroke-width="0.8"/><ellipse cx="10.5" cy="12" rx="3" ry="3.5" fill="#9cc48c" stroke="#3a6a5a" stroke-width="0.8"/></g></svg>
<svg class="r" style="left:185.5px;top:655.5px;" width="16" height="16" viewBox="0 0 16 16"><g opacity="0.8"><rect x="0.5" y="0.5" width="11" height="11" rx="1" fill="#f09aa2" stroke="#d87880"/></g></svg>
<svg class="r" style="left:211.5px;top:653.5px;" width="16" height="16" viewBox="0 0 16 16"><g opacity="0.75"><circle cx="7" cy="7" r="6.5" fill="#8ab8e8"/><path d="M3 3 Q6 5 5 8 Q8 9 7 13 Q11 10 12 6 Q9 5 8 2 Z" fill="#9ac070"/><circle cx="5" cy="4.5" r="2.5" fill="#fff" opacity="0.5"/></g></svg>
<svg class="r" style="left:238.5px;top:653.5px;" width="16" height="16" viewBox="0 0 16 16"><g opacity="0.75"><rect x="0.5" y="0.5" width="13" height="10" rx="1.5" fill="#4a78c8"/><rect x="2" y="2" width="10" height="7" fill="#eef4fc"/><path d="M3.5 4.5 H8.5 M3.5 6.5 H10" stroke="#4a78c8" stroke-width="0.9"/><rect x="3" y="11.5" width="8" height="1.5" fill="#4a78c8"/></g></svg>
<svg class="r" style="left:265px;top:652px;" width="16" height="16" viewBox="0 0 16 16"><g opacity="0.75"><path d="M1 15 L2.5 10.5 L12 1 L15 4 L5.5 13.5 Z" fill="#f4d8a8" stroke="#c0a070" stroke-width="0.8"/><path d="M1 15 L2.5 10.5 L5.5 13.5 Z" fill="#777"/></g></svg>
<svg class="r" style="left:291.5px;top:653px;" width="16" height="16" viewBox="0 0 16 16"><g opacity="0.85"><rect x="0.5" y="0.5" width="14" height="13" fill="#f4f8fc" stroke="#3a5a90" stroke-width="1"/><path d="M0.5 3.5 H14.5 M0.5 7 H14.5 M0.5 10.5 H14.5 M5 3.5 V13.5" stroke="#3a5a90" stroke-width="0.8"/></g></svg>
<svg class="r" style="left:318px;top:652px;" width="16" height="16" viewBox="0 0 16 16"><g opacity="0.9"><path d="M1 3 H7 M5 1 L7 3 L5 5 M1 13 H7 M5 11 L7 13 L5 15 M9 1 V5 M9 11 V15" stroke="#2a4a90" stroke-width="1"/><path d="M4 7 H10 V5 L14.5 8 L10 11 V9 H4 Z" fill="#fce89a" stroke="#c08820" stroke-width="0.9"/></g></svg>
<svg class="r" style="left:345.5px;top:653.5px;" width="16" height="16" viewBox="0 0 16 16"><path d="M5 0.5 H9 V5 H13.5 V9 H9 V13.5 H5 V9 H0.5 V5 H5 Z" fill="#7ac83a" stroke="#3a8a1a" stroke-width="0.9"/></svg>
<svg class="r" style="left:388px;top:655px;" width="16" height="16" viewBox="0 0 16 16"><path d="M2 2.5 H12 L7 7 Z" fill="#fff" stroke="#000" stroke-width="1.1" stroke-linejoin="round"/></svg>
<svg class="r" style="left:358px;top:624px;" width="12" height="6" viewBox="0 0 12 6"><rect x="1.5" y="1.5" width="9" height="3" fill="#fff" stroke="#000" stroke-width="1.2"/></svg>
<svg class="r" style="left:385px;top:624px;" width="12" height="12" viewBox="0 0 12 12"><rect x="1.5" y="1.5" width="9" height="9" fill="#fff" stroke="#000" stroke-width="1.2"/><path d="M1.5 3.5 H10.5" stroke="#000" stroke-width="1"/></svg>
<svg class="r" style="left:30px;top:727px;" width="14" height="14" viewBox="0 0 14 14"><path d="M3.5 0.5 H10.5 L14 7 L10.5 13.5 H3.5 L0 7 Z" fill="#0c8a0c"/><path d="M4.6 5 A3.4 3.4 0 1 0 9.4 5" stroke="#fff" stroke-width="1.4" fill="none"/><path d="M7 2.5 V7.5" stroke="#fff" stroke-width="1.4"/></svg>
<svg class="r" style="left:145px;top:624px;" width="12" height="12" viewBox="0 0 12 12"><path d="M2.2 2.2 L9.8 9.8 M9.8 2.2 L2.2 9.8" stroke="#000" stroke-width="3.2" stroke-linecap="square"/><path d="M2.6 2.6 L9.4 9.4 M9.4 2.6 L2.6 9.4" stroke="#fff" stroke-width="1.5" stroke-linecap="square"/></svg>
<div class="r" style="left:9.5px;top:681.5px;width:399px;height:33px;background:#fff;border:1px solid #cdcdcd;border-radius:3px;"></div>
<div class="t" style="left:23.29px;top:698.73px;font-size:15.5px;color:#a3a3a3;transform:scaleX(1.0055);transform-origin:0 0;">Type tags, projects, or working set names to match (i...</div>
<svg class="r" style="left:16.5px;top:729px;" width="7" height="11" viewBox="0 0 7 11"><path d="M0 0 L6 5.5 L0 11 Z" fill="#a8a8a8"/></svg>
<div class="t" style="left:48.16px;top:734.43px;font-size:15.5px;color:#333;font-weight:700;transform:scaleX(1.0461);transform-origin:0 0;">local</div>
<div class="r" style="left:421px;top:109px;width:1133px;height:761px;background:#fff;border:1px solid #aeaeae;border-radius:6px;"></div>
<div class="r" style="left:422px;top:110px;width:1131px;height:30px;background:#eeeeee;border-radius:5px 5px 0 0;"></div>
<div class="r" style="left:422px;top:140px;width:1131px;height:1px;background:#a8a8a8;"></div>
<div class="r" style="left:620.5px;top:109.5px;width:235px;height:33px;background:#fff;border-left:1px solid #a8a8a8;border-right:1px solid #a8a8a8;border-top:1px solid #a8a8a8;border-radius:6px 6px 0 0;"></div>
<div class="t" style="left:446.40px;top:127.30px;font-size:15px;color:#4a4a4a;transform:scaleX(1.0102);transform-origin:0 0;">TreinamentoDTO.java</div>
<div class="t" style="left:644.77px;top:127.30px;font-size:15px;color:#111;transform:scaleX(1.0242);transform-origin:0 0;">*TreinamentoDTOTest.java</div>
<svg class="r" style="left:835px;top:120px;" width="12" height="12" viewBox="0 0 12 12"><path d="M2.2 2.2 L9.8 9.8 M9.8 2.2 L2.2 9.8" stroke="#000" stroke-width="2.6" stroke-linecap="square"/><path d="M2.6 2.6 L9.4 9.4 M9.4 2.6 L2.6 9.4" stroke="#fff" stroke-width="1.1" stroke-linecap="square"/></svg>
<svg class="r" style="left:428px;top:119px;" width="12" height="14" viewBox="0 0 12 14"><path d="M0.5 0.5 H7.5 L10.5 3.5 V13.5 H0.5 Z" fill="#eef4fc" stroke="#a88a50"/><path d="M6 3 V9.5 Q6 12 3 11.5" stroke="#2a68b0" stroke-width="1.6" fill="none"/></svg>
<svg class="r" style="left:627px;top:119px;" width="12" height="14" viewBox="0 0 12 14"><path d="M0.5 0.5 H7.5 L10.5 3.5 V13.5 H0.5 Z" fill="#eef4fc" stroke="#a88a50"/><path d="M6 3 V9.5 Q6 12 3 11.5" stroke="#2a68b0" stroke-width="1.6" fill="none"/></svg>
<svg class="r" style="left:1495px;top:119px;" width="12" height="6" viewBox="0 0 12 6"><rect x="1.5" y="1.5" width="9" height="3" fill="#fff" stroke="#000" stroke-width="1.2"/></svg>
<svg class="r" style="left:1522px;top:119px;" width="12" height="12" viewBox="0 0 12 12"><rect x="1.5" y="1.5" width="9" height="9" fill="#fff" stroke="#000" stroke-width="1.2"/><path d="M1.5 3.5 H10.5" stroke="#000" stroke-width="1"/></svg>
<div class="r" style="left:424px;top:142px;width:12px;height:725px;background:#f6f6f6;"></div>
<div class="r" style="left:465px;top:142px;width:1px;height:725px;background:#f0f0f0;"></div>
<div class="r" style="left:1538px;top:142px;width:14px;height:725px;background:#f8f8f8;"></div>
<div class="r" style="left:468px;top:303px;width:1070px;height:20px;background:#e8f2fe;"></div>
<div class="r" style="left:436px;top:303px;width:20px;height:20px;background:#ead8ea;"></div>
<div class="r" style="left:424px;top:263px;width:12px;height:80px;background:repeating-conic-gradient(#88b468 0 25%,#e6f0dc 0 50%) 0 0/2px 2px;"></div>
<div class="t" style="left:446.00px;top:154.56px;font-size:16.67px;color:#787878;font-family:'Liberation Mono', monospace;">1</div>
<div class="t" style="left:468.00px;top:154.56px;font-size:16.67px;color:#000;font-family:'Liberation Mono', monospace;"><b style="color:#7f0055">package</b> br.com.basis.treinamentosuperior.dto;</div>
<div class="t" style="left:446.00px;top:174.56px;font-size:16.67px;color:#787878;font-family:'Liberation Mono', monospace;">2</div>
<div class="t" style="left:446.00px;top:194.56px;font-size:16.67px;color:#787878;font-family:'Liberation Mono', monospace;">3</div>
<div class="t" style="left:468.00px;top:194.56px;font-size:16.67px;color:#000;font-family:'Liberation Mono', monospace;"><b style="color:#7f0055">import</b> org.junit.jupiter.api.Test;</div>
<div class="t" style="left:446.00px;top:214.56px;font-size:16.67px;color:#787878;font-family:'Liberation Mono', monospace;">4</div>
<div class="t" style="left:446.00px;top:234.56px;font-size:16.67px;color:#787878;font-family:'Liberation Mono', monospace;">5</div>
<div class="t" style="left:468.00px;top:234.56px;font-size:16.67px;color:#000;font-family:'Liberation Mono', monospace;"><b style="color:#7f0055">public</b> <b style="color:#7f0055">class</b> TreinamentoDTOTest {</div>
<div class="t" style="left:446.00px;top:254.56px;font-size:16.67px;color:#787878;font-family:'Liberation Mono', monospace;">6</div>
<div class="t" style="left:446.00px;top:274.56px;font-size:16.67px;color:#787878;font-family:'Liberation Mono', monospace;">7</div>
<div class="t" style="left:468.00px;top:274.56px;font-size:16.67px;color:#000;font-family:'Liberation Mono', monospace;">    <span style="color:#646464">@Test</span></div>
<div class="t" style="left:446.00px;top:294.56px;font-size:16.67px;color:#787878;font-family:'Liberation Mono', monospace;">8</div>
<div class="t" style="left:468.00px;top:294.56px;font-size:16.67px;color:#000;font-family:'Liberation Mono', monospace;">    <b style="color:#7f0055">public</b> <b style="color:#7f0055">void</b> test1() {</div>
<div class="t" style="left:446.00px;top:314.56px;font-size:16.67px;color:#787878;font-family:'Liberation Mono', monospace;">9</div>
<div class="t" style="left:468.00px;top:314.56px;font-size:16.67px;color:#000;font-family:'Liberation Mono', monospace;">        Trei</div>
<div class="t" style="left:436.00px;top:334.56px;font-size:16.67px;color:#787878;font-family:'Liberation Mono', monospace;">10</div>
<div class="t" style="left:468.00px;top:334.56px;font-size:16.67px;color:#000;font-family:'Liberation Mono', monospace;">    }</div>
<div class="t" style="left:436.00px;top:354.56px;font-size:16.67px;color:#787878;font-family:'Liberation Mono', monospace;">11</div>
<div class="t" style="left:436.00px;top:374.56px;font-size:16.67px;color:#787878;font-family:'Liberation Mono', monospace;">12</div>
<div class="t" style="left:468.00px;top:374.56px;font-size:16.67px;color:#000;font-family:'Liberation Mono', monospace;">}</div>
<div class="t" style="left:436.00px;top:394.56px;font-size:16.67px;color:#787878;font-family:'Liberation Mono', monospace;">13</div>
<svg class="r" style="left:456px;top:268px;" width="9" height="9" viewBox="0 0 9 9"><circle cx="4.5" cy="4.5" r="4" fill="#fff" stroke="#8aa0b8" stroke-width="0.9"/><path d="M2.3 4.5 H6.7" stroke="#5a7088" stroke-width="1"/></svg>
<svg class="r" style="left:424.5px;top:306.5px;" width="12" height="12" viewBox="0 0 12 12"><circle cx="6" cy="6" r="5.6" fill="#e04848" stroke="#a82020" stroke-width="0.8"/><circle cx="5.5" cy="5" r="3" fill="#f08080" opacity="0.6"/><path d="M3.8 3.8 L8.2 8.2 M8.2 3.8 L3.8 8.2" stroke="#fff" stroke-width="1.8"/></svg>
<div class="r" style="left:588px;top:304px;width:2px;height:18px;background:#000;"></div>
<svg class="r" style="left:548px;top:319px;" width="40" height="4" viewBox="0 0 40 4"><path d="M0 3 L2 1 L4 3 L6 1 L8 3 L10 1 L12 3 L14 1 L16 3 L18 1 L20 3 L22 1 L24 3 L26 1 L28 3 L30 1 L32 3 L34 1 L36 3 L38 1 L40 3" stroke="#f0307a" stroke-width="1" fill="none"/></svg>
<div class="r" style="left:1539px;top:311px;width:9px;height:5px;background:#f8c0dc;border:1px solid #e8509a;"></div>
<div class="r" style="left:588px;top:324px;width:420px;height:264px;background:#fff;border:1px solid #c4c4c4;box-shadow:0 1px 4px 1px rgba(0,0,0,0.28);"></div>
<div class="r" style="left:591px;top:326px;width:414px;height:28px;background:#9bb77a;"></div>
<div class="r" style="left:591px;top:327px;width:414px;height:258px;overflow:hidden">
<div class="t" style="left:22.44px;top:13.83px;font-size:15.5px;color:#3c3c3c;font-weight:700;transform:scaleX(1.0436);transform-origin:0 0;">Trei</div>
<div class="t" style="left:50.39px;top:13.83px;font-size:15.5px;color:#3c3c3c;transform:scaleX(1.0024);transform-origin:0 0;">namentoDTO</div>
<div class="t" style="left:147.80px;top:13.83px;font-size:15.5px;color:#3c3c3c;transform:scaleX(1.0024);transform-origin:0 0;">- br.com.basis.treinamentosuperior.dto</div>
<svg class="r" style="left:3px;top:5.5px;" width="13" height="13" viewBox="0 0 13 13"><circle cx="6.5" cy="6.5" r="6" fill="#3f9a3f"/><circle cx="6.5" cy="6.5" r="6" fill="none" stroke="#2d7a2d" stroke-width="1"/><path d="M9 4.3 A3 3 0 1 0 9 8.7" stroke="#fff" stroke-width="2" fill="none"/></svg>
<div class="t" style="left:22.44px;top:41.83px;font-size:15.5px;color:#3c3c3c;font-weight:700;transform:scaleX(1.0436);transform-origin:0 0;">Trei</div>
<div class="t" style="left:50.40px;top:41.83px;font-size:15.5px;color:#3c3c3c;transform:scaleX(0.9942);transform-origin:0 0;">namentoDTOTest</div>
<div class="t" style="left:174.20px;top:41.83px;font-size:15.5px;color:#8c8c8c;transform:scaleX(0.9942);transform-origin:0 0;">- br.com.basis.treinamentosuperior</div>
<svg class="r" style="left:3px;top:33.5px;" width="13" height="13" viewBox="0 0 13 13"><circle cx="6.5" cy="6.5" r="6" fill="#3f9a3f"/><circle cx="6.5" cy="6.5" r="6" fill="none" stroke="#2d7a2d" stroke-width="1"/><path d="M9 4.3 A3 3 0 1 0 9 8.7" stroke="#fff" stroke-width="2" fill="none"/></svg>
<div class="t" style="left:22.44px;top:69.83px;font-size:15.5px;color:#3c3c3c;font-weight:700;transform:scaleX(1.0436);transform-origin:0 0;">Trei</div>
<div class="t" style="left:50.36px;top:69.83px;font-size:15.5px;color:#3c3c3c;transform:scaleX(1.0288);transform-origin:0 0;">namentoSuperiorApplication</div>
<div class="t" style="left:253.20px;top:69.83px;font-size:15.5px;color:#8c8c8c;transform:scaleX(1.0288);transform-origin:0 0;">- br.com.basis.treinamentosuperior</div>
<svg class="r" style="left:3px;top:61.5px;" width="13" height="13" viewBox="0 0 13 13"><circle cx="6.5" cy="6.5" r="6" fill="#3f9a3f"/><circle cx="6.5" cy="6.5" r="6" fill="none" stroke="#2d7a2d" stroke-width="1"/><path d="M9 4.3 A3 3 0 1 0 9 8.7" stroke="#fff" stroke-width="2" fill="none"/></svg>
</div>
<div class="t" style="left:718.31px;top:576.15px;font-size:14px;color:#555;transform:scaleX(0.9693);transform-origin:0 0;">Press 'Ctrl+Space' to show Template Proposals</div>
<div class="r" style="left:1555.5px;top:110px;width:43.5px;height:67px;background:#e0e0e0;border:1px solid #bdbdbd;border-radius:6px;box-shadow:inset 1px 1px 0 #fff;"></div>
<div class="r" style="left:1555.5px;top:179px;width:43.5px;height:142px;background:#e0e0e0;border:1px solid #bdbdbd;border-radius:6px;box-shadow:inset 1px 1px 0 #fff;"></div>
<div class="r" style="left:1564px;top:115.5px;width:4px;height:1.5px;background:#b0a890;"></div>
<div class="r" style="left:1564px;top:117px;width:4px;height:1px;background:#fafafa;"></div>
<div class="r" style="left:1571px;top:115.5px;width:4px;height:1.5px;background:#b0a890;"></div>
<div class="r" style="left:1571px;top:117px;width:4px;height:1px;background:#fafafa;"></div>
<div class="r" style="left:1578px;top:115.5px;width:4px;height:1.5px;background:#b0a890;"></div>
<div class="r" style="left:1578px;top:117px;width:4px;height:1px;background:#fafafa;"></div>
<div class="r" style="left:1585px;top:115.5px;width:4px;height:1.5px;background:#b0a890;"></div>
<div class="r" style="left:1585px;top:117px;width:4px;height:1px;background:#fafafa;"></div>
<div class="r" style="left:1564px;top:185.5px;width:4px;height:1.5px;background:#b0a890;"></div>
<div class="r" style="left:1564px;top:187px;width:4px;height:1px;background:#fafafa;"></div>
<div class="r" style="left:1571px;top:185.5px;width:4px;height:1.5px;background:#b0a890;"></div>
<div class="r" style="left:1571px;top:187px;width:4px;height:1px;background:#fafafa;"></div>
<div class="r" style="left:1578px;top:185.5px;width:4px;height:1.5px;background:#b0a890;"></div>
<div class="r" style="left:1578px;top:187px;width:4px;height:1px;background:#fafafa;"></div>
<div class="r" style="left:1585px;top:185.5px;width:4px;height:1.5px;background:#b0a890;"></div>
<div class="r" style="left:1585px;top:187px;width:4px;height:1px;background:#fafafa;"></div>
<svg class="r" style="left:1572.5px;top:129px;" width="9" height="8" viewBox="0 0 9 8"><rect x="3.5" y="0.5" width="5" height="4" fill="#fff" stroke="#605040" stroke-width="1.2"/><rect x="0.5" y="3.5" width="5" height="4" fill="#fff" stroke="#605040" stroke-width="1.2"/></svg>
<svg class="r" style="left:1569.5px;top:150.5px;" width="16" height="16" viewBox="0 0 16 16"><rect x="1" y="1" width="5" height="5" fill="#c8e0f8" stroke="#2a78d0" stroke-width="1.1"/><rect x="1" y="10" width="5" height="5" fill="#c8e0f8" stroke="#2a78d0" stroke-width="1.1"/><path d="M8 3 H14 M11 8 H14 M8 12.5 H14" stroke="#2a78d0" stroke-width="1.1"/><rect x="8" y="7" width="2" height="2" fill="none" stroke="#2a78d0" stroke-width="0.8"/></svg>
<svg class="r" style="left:1572.5px;top:198px;" width="9" height="8" viewBox="0 0 9 8"><rect x="3.5" y="0.5" width="5" height="4" fill="#fff" stroke="#605040" stroke-width="1.2"/><rect x="0.5" y="3.5" width="5" height="4" fill="#fff" stroke="#605040" stroke-width="1.2"/></svg>
<svg class="r" style="left:1569px;top:218.5px;" width="16" height="16" viewBox="0 0 16 16"><path d="M0.5 0.5 H11 Q13.5 4 12 7.5 Q13.5 11 11.5 15.5 H0.5 Z" fill="#e8f0fa" stroke="#7a88a8" stroke-width="0.9"/><path d="M0.5 8 H12.5 M7 0.5 V15.5" stroke="#7a88a8" stroke-width="0.8"/><circle cx="4" cy="4.3" r="2.4" fill="#e02020"/><path d="M1.8 14 Q2 10.5 4 10 Q6 10.5 6.2 14 Z" fill="#f8a020"/></svg>
<svg class="r" style="left:1569.5px;top:246px;" width="16" height="16" viewBox="0 0 16 16"><text x="0.5" y="11" font-family="Liberation Sans" font-weight="700" font-style="italic" font-size="13" fill="#2a68b0">@</text></svg>
<svg class="r" style="left:1570px;top:268.5px;" width="16" height="16" viewBox="0 0 16 16"><path d="M1.5 0.5 H8.5 L11.5 3.5 V15.5 H1.5 Z" fill="#f8f4e8" stroke="#a88a50"/><text x="2.2" y="11" font-family="Liberation Sans" font-size="8" fill="#2a58a0">{=</text><path d="M7 12 H11 V10 L14.5 13 L11 16 V14 H7 Z" fill="#f8c848" stroke="#c08010" stroke-width="0.7"/></svg>
<svg class="r" style="left:1571px;top:297.5px;" width="16" height="16" viewBox="0 0 16 16"><rect x="0.5" y="0.5" width="13" height="9" fill="#dfe8f4" stroke="#7890b0" stroke-width="0.8"/><rect x="1" y="3.5" width="7" height="3" fill="#58b858"/><circle cx="10.5" cy="10.5" r="4.5" fill="#3aa03a" stroke="#1e7a1e" stroke-width="0.8"/><path d="M9 8 L13 10.5 L9 13 Z" fill="#fff"/></svg>
<div class="r" style="left:0px;top:870px;width:1600px;height:30px;background:#e1e1e1;"></div>
<div class="r" style="left:0px;top:899px;width:1600px;height:1px;background:#d2d2d2;"></div>
<div class="r" style="left:941px;top:872px;width:1px;height:22px;background:#cfcfcf;"></div>
<div class="r" style="left:1058px;top:872px;width:1px;height:22px;background:#cfcfcf;"></div>
<div class="r" style="left:1170px;top:872px;width:1px;height:22px;background:#cfcfcf;"></div>
<div class="t" style="left:948.42px;top:882.60px;font-size:15px;color:#444;transform:scaleX(1.0648);transform-origin:0 0;">Writable</div>
<div class="t" style="left:1065.49px;top:882.60px;font-size:15px;color:#444;transform:scaleX(1.0504);transform-origin:0 0;">Smart Insert</div>
<div class="t" style="left:1176.28px;top:882.60px;font-size:15px;color:#444;transform:scaleX(1.0628);transform-origin:0 0;">9 : 13</div>
<svg class="r" style="left:1280px;top:872px;" width="2" height="22" viewBox="0 0 2 22"><rect x="0" y="1" width="1.5" height="3" fill="#a8a8a8"/><rect x="0" y="7" width="1.5" height="3" fill="#a8a8a8"/><rect x="0" y="13" width="1.5" height="3" fill="#a8a8a8"/><rect x="0" y="19" width="1.5" height="3" fill="#a8a8a8"/></svg>
</body></html>
